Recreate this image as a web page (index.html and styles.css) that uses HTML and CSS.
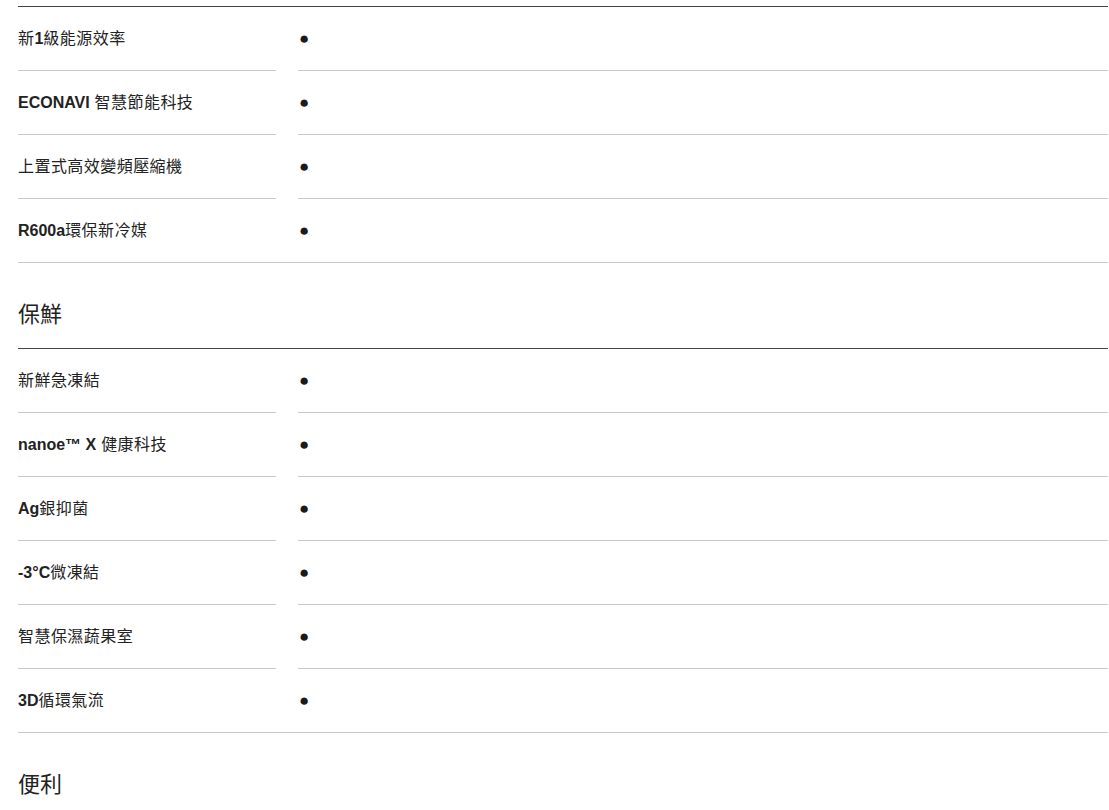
FILE: index.html
```html
<!DOCTYPE html>
<html lang="zh-Hant">
<head>
<meta charset="utf-8">
<title>規格</title>
<link rel="stylesheet" href="styles.css">
</head>
<body>
<div class="spec">
  <div class="table">
    <div class="row"><div class="label"><span>新<b>1</b>級能源效率</span></div><div class="gap"></div><div class="value"><span class="dot">●</span></div></div>
    <div class="row"><div class="label"><span><b>ECONAVI</b> 智慧節能科技</span></div><div class="gap"></div><div class="value"><span class="dot">●</span></div></div>
    <div class="row"><div class="label"><span>上置式高效變頻壓縮機</span></div><div class="gap"></div><div class="value"><span class="dot">●</span></div></div>
    <div class="row"><div class="label"><span><b>R600a</b>環保新冷媒</span></div><div class="gap"></div><div class="value"><span class="dot">●</span></div></div>
  </div>

  <h2 class="section-title">保鮮</h2>
  <div class="table">
    <div class="row"><div class="label"><span>新鮮急凍結</span></div><div class="gap"></div><div class="value"><span class="dot">●</span></div></div>
    <div class="row"><div class="label"><span><b>nanoe™ X</b> 健康科技</span></div><div class="gap"></div><div class="value"><span class="dot">●</span></div></div>
    <div class="row"><div class="label"><span><b>Ag</b>銀抑菌</span></div><div class="gap"></div><div class="value"><span class="dot">●</span></div></div>
    <div class="row"><div class="label"><span><b>-3°C</b>微凍結</span></div><div class="gap"></div><div class="value"><span class="dot">●</span></div></div>
    <div class="row"><div class="label"><span>智慧保濕蔬果室</span></div><div class="gap"></div><div class="value"><span class="dot">●</span></div></div>
    <div class="row"><div class="label"><span><b>3D</b>循環氣流</span></div><div class="gap"></div><div class="value"><span class="dot">●</span></div></div>
  </div>

  <h2 class="section-title">便利</h2>
</div>
</body>
</html>
```

FILE: styles.css
```css
*, *::before, *::after {
  box-sizing: border-box;
}
html, body {
  margin: 0;
  padding: 0;
  background: #fff;
}
body {
  font-family: "Liberation Sans", "Noto Sans CJK TC", Arial, sans-serif;
  color: #222;
}
.spec {
  padding: 6px 1px 0 18px;
}
.table {
  border-top: 1px solid #444;
}
.row {
  display: grid;
  grid-template-columns: 258px 22px 1fr;
  height: 64px;
}
.label,
.value {
  display: flex;
  align-items: center;
  border-bottom: 1px solid #c8c8c8;
  font-size: 16px;
  line-height: 20px;
}
.label {
  letter-spacing: 0.45px;
}
.label b {
  font-weight: 700;
  letter-spacing: 0;
}
.value {
  padding-left: 1px;
}
.dot {
  font-size: 17px;
  line-height: 1;
  color: #1a1a1a;
}
.row:last-child {
  border-bottom: 1px solid #c8c8c8;
}
.row:last-child .label,
.row:last-child .value {
  border-bottom: none;
}
.section-title {
  margin: 0;
  padding: 37px 0 18px;
  font-size: 22px;
  line-height: 30px;
  font-weight: 400;
  color: #222;
}
```
